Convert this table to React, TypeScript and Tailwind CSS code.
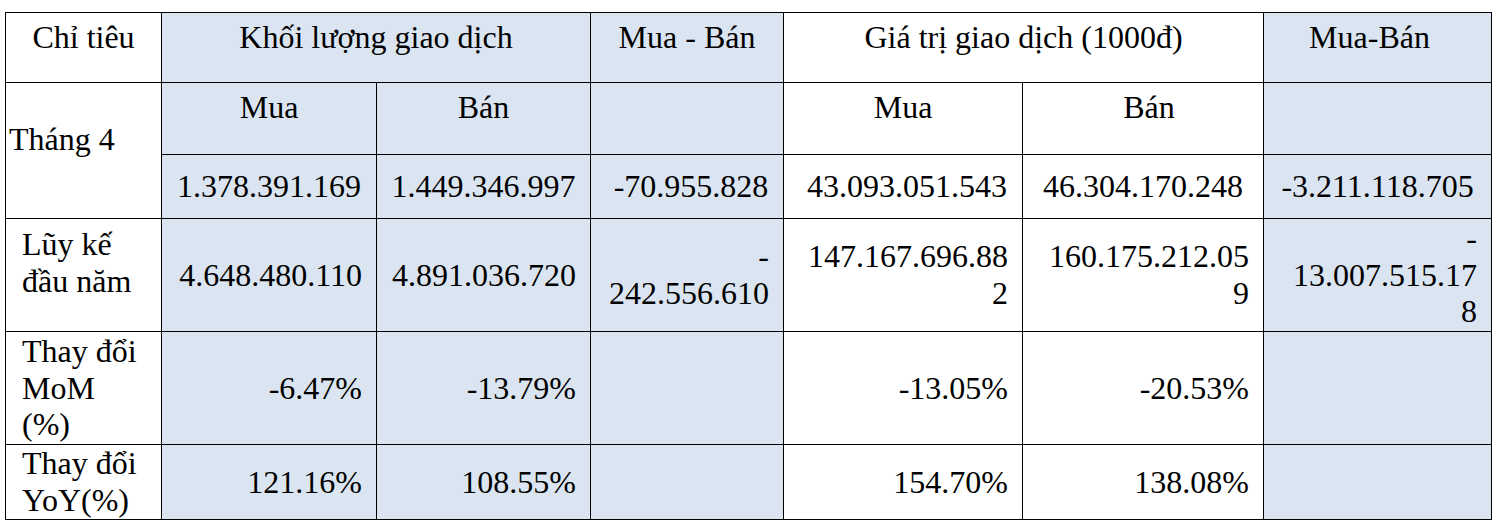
const blue = 'bg-[#dbe5f1]'
const cell = 'border border-black p-0'

type Row = {
  label: string[]
  labelPad: string
  h: string
  values: string[][]
}

const rows: Row[] = [
  {
    label: ['Lũy kế', 'đầu năm'],
    labelPad: 'align-top pt-[7px]',
    h: 'h-[113px]',
    values: [['4.648.480.110'], ['4.891.036.720'], ['-', '242.556.610'], ['147.167.696.88', '2'], ['160.175.212.05', '9'], ['-', '13.007.515.17', '8']],
  },
  {
    label: ['Thay đổi', 'MoM', '(%)'],
    labelPad: 'align-middle',
    h: 'h-[113px]',
    values: [['-6.47%'], ['-13.79%'], [], ['-13.05%'], ['-20.53%'], []],
  },
  {
    label: ['Thay đổi', 'YoY(%)'],
    labelPad: 'align-middle',
    h: 'h-[75px]',
    values: [['121.16%'], ['108.55%'], [], ['154.70%'], ['138.08%'], []],
  },
]

// which of the six data columns are shaded
const shade = [true, true, true, false, false, true]

function Lines({ lines }: { lines: string[] }) {
  return (
    <>
      {lines.map((l, i) => (
        <div key={i}>{l}</div>
      ))}
    </>
  )
}

export default function App() {
  return (
    <div className="min-h-screen bg-white pl-[5px] pt-[12px] text-black [font-family:'Liberation_Serif','Times_New_Roman',serif] text-[32px] leading-[1.15]">
      <table className="table-fixed border-collapse w-[1486px] [font-family:'Liberation_Serif','Times_New_Roman',serif]">
        <colgroup>
          <col className="w-[156px]" />
          <col className="w-[215px]" />
          <col className="w-[214px]" />
          <col className="w-[193px]" />
          <col className="w-[239px]" />
          <col className="w-[241px]" />
          <col className="w-[228px]" />
        </colgroup>
        <tbody>
          <tr className="h-[70px]">
            <td className={`${cell} align-top pt-[6px] text-center`}>Chỉ tiêu</td>
            <td colSpan={2} className={`${cell} ${blue} align-top pt-[6px] text-center`}>Khối lượng giao dịch</td>
            <td className={`${cell} ${blue} align-top pt-[6px] text-center`}>Mua - Bán</td>
            <td colSpan={2} className={`${cell} align-top pt-[6px] text-center`}>Giá trị giao dịch (1000đ)</td>
            <td className={`${cell} ${blue} align-top pt-[6px] pr-[16px] text-center`}>Mua-Bán</td>
          </tr>
          <tr className="h-[72px]">
            <td rowSpan={2} className={`${cell} align-top pt-[38px] pl-[3px] text-left`}>Tháng 4</td>
            <td className={`${cell} ${blue} align-top pt-[6px] text-center`}>Mua</td>
            <td className={`${cell} ${blue} align-top pt-[6px] text-center`}>Bán</td>
            <td className={`${cell} ${blue}`}></td>
            <td className={`${cell} align-top pt-[6px] text-center`}>Mua</td>
            <td className={`${cell} align-top pt-[6px] pl-[12px] text-center`}>Bán</td>
            <td className={`${cell} ${blue}`}></td>
          </tr>
          <tr className="h-[64px]">
            {['1.378.391.169', '1.449.346.997', '-70.955.828', '43.093.051.543', '46.304.170.248', '-3.211.118.705'].map((v, i) => (
              <td key={i} className={`${cell} ${shade[i] ? blue : ''} align-middle text-center whitespace-nowrap ${i === 2 || i === 3 ? 'pl-[8px]' : ''}`}>
                {v}
              </td>
            ))}
          </tr>
          {rows.map((r, ri) => (
            <tr key={ri} className={r.h}>
              <td className={`${cell} ${r.labelPad} pl-[16px] text-left`}>
                <Lines lines={r.label} />
              </td>
              {r.values.map((v, i) => (
                <td key={i} className={`${cell} ${shade[i] ? blue : ''} align-middle text-right pr-[14px] whitespace-nowrap`}>
                  <Lines lines={v} />
                </td>
              ))}
            </tr>
          ))}
        </tbody>
      </table>
    </div>
  )
}
